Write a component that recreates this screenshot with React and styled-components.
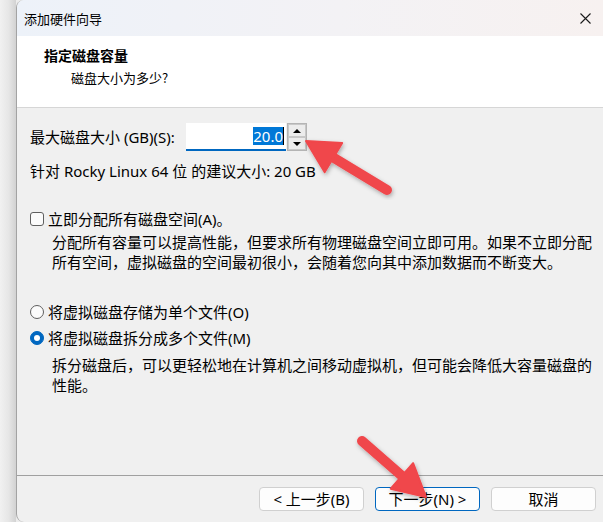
import React from "react";
import styled, { createGlobalStyle } from "styled-components";

const GlobalStyle = createGlobalStyle`
  html, body {
    margin: 0;
    padding: 0;
    background: #ececec;
  }
  body {
    font-family: "Noto Sans", "Noto Sans CJK SC", sans-serif;
    color: #000;
  }
`;

const Page = styled.div`
  position: relative;
  display: flex;
  width: 603px;
  height: 522px;
  overflow: hidden;
`;

const ShadowStrip = styled.div`
  width: 16px;
  flex-shrink: 0;
  background: linear-gradient(90deg, #f1f1f1 0%, #e6e6e6 55%, #d2d2d2 100%);
`;

const Window = styled.div`
  flex: 1;
  display: flex;
  flex-direction: column;
  background: #f0f0f0;
  border-left: 1px solid #a3a3a3;
  border-radius: 8px 0 0 8px;
  overflow: hidden;
`;

const TitleBar = styled.div`
  height: 36px;
  display: flex;
  align-items: center;
  justify-content: space-between;
  padding: 0 12px 0 7px;
  background: linear-gradient(90deg, #edf2f9 0%, #f3f2f5 55%, #f7f1f0 100%);
  font-family: "Noto Sans CJK SC", sans-serif;
  font-size: 13px;
`;

const Header = styled.div`
  height: 72px;
  box-sizing: border-box;
  background: #fff;
  border-bottom: 1px solid #d6d6d6;
  padding: 9px 0 0 27px;
  font-family: "Noto Sans CJK SC", sans-serif;
`;

const HeaderTitle = styled.div`
  font-size: 14px;
  font-weight: 700;
  line-height: 20px;
`;

const HeaderSub = styled.div`
  font-size: 13px;
  line-height: 20px;
  margin: 3px 0 0 27px;
`;

const Body = styled.div`
  flex: 1;
  padding: 15px 0 0 13px;
  font-size: 15px;
  line-height: 20px;
`;

const SizeRow = styled.div`
  display: flex;
  align-items: center;
  height: 28px;
`;

const SizeLabel = styled.span`
  width: 156px;
`;

const SizeInput = styled.div`
  width: 100px;
  height: 28px;
  box-sizing: border-box;
  background: #fff;
  border-bottom: 2px solid #0067c0;
  display: flex;
  align-items: center;
  justify-content: flex-end;
  padding-right: 2px;
`;

const Selected = styled.span`
  background: #0078d7;
  color: #fff;
  line-height: 18px;
`;

const Caret = styled.span`
  width: 1px;
  height: 18px;
  background: #000;
`;

const Spinner = styled.div`
  display: flex;
  flex-direction: column;
  width: 20px;
  height: 28px;
  margin-left: 1px;
  border: 1px solid #b4b4b4;
  box-sizing: border-box;
`;

const SpinButton = styled.div`
  flex: 1;
  display: flex;
  align-items: center;
  justify-content: center;
  background: #ececec;
  border: 1px solid #c8c8c8;
  &::after {
    content: "";
    border-left: 4px solid transparent;
    border-right: 4px solid transparent;
    ${(p) => (p.$down ? "border-top: 4px solid #000;" : "border-bottom: 4px solid #000;")}
  }
`;

const Line = styled.div`
  margin-top: ${(p) => p.$top || 0}px;
`;

const Option = styled.label`
  display: flex;
  align-items: center;
  gap: 4px;
  margin-top: ${(p) => p.$top || 0}px;
`;

const CheckBox = styled.span`
  width: 14px;
  height: 14px;
  box-sizing: border-box;
  border: 1px solid #5f5f5f;
  border-radius: 3px;
  background: #fbfbfb;
`;

const Radio = styled.span`
  width: 14px;
  height: 14px;
  box-sizing: border-box;
  border-radius: 50%;
  display: flex;
  align-items: center;
  justify-content: center;
  border: 1px solid ${(p) => (p.$checked ? "#0067c0" : "#5f5f5f")};
  background: ${(p) => (p.$checked ? "#0067c0" : "#fbfbfb")};
  &::after {
    content: "";
    width: 6px;
    height: 6px;
    border-radius: 50%;
    background: ${(p) => (p.$checked ? "#fff" : "transparent")};
  }
`;

const Note = styled.p`
  margin: ${(p) => p.$top || 0}px 0 0 22px;
  width: 546px;
`;

const Footer = styled.div`
  height: 47px;
  box-sizing: border-box;
  border-top: 1px solid #a0a0a0;
  display: flex;
  justify-content: flex-end;
  gap: 11px;
  padding: 11px 7px 0 0;
`;

const Button = styled.button`
  width: 105px;
  height: 24px;
  box-sizing: border-box;
  background: #fdfdfd;
  border: 1px solid ${(p) => (p.$primary ? "#0067c0" : "#d0d0d0")};
  border-radius: 4px;
  font-family: "Noto Sans", "Noto Sans CJK SC", sans-serif;
  font-size: 15px;
  line-height: 20px;
  color: #000;
  padding: 0;
`;

const Arrows = styled.svg`
  position: absolute;
  left: 0;
  top: 0;
  pointer-events: none;
`;

function Arrow({ from, to }) {
  const [x1, y1] = from;
  const [x2, y2] = to;
  const len = Math.hypot(x2 - x1, y2 - y1);
  const ux = (x2 - x1) / len;
  const uy = (y2 - y1) / len;
  const bx = x2 - ux * 32;
  const by = y2 - uy * 32;
  const nx = -uy * 17;
  const ny = ux * 17;
  return (
    <g filter="url(#arrowShadow)">
      <line x1={x1} y1={y1} x2={bx + ux * 4} y2={by + uy * 4} stroke="#f0464b" strokeWidth="10" strokeLinecap="round" />
      <polygon
        points={`${x2},${y2} ${bx + nx},${by + ny} ${bx - nx},${by - ny}`}
        fill="#f0464b"
        stroke="#f0464b"
        strokeWidth="2"
        strokeLinejoin="round"
      />
    </g>
  );
}

export default function App() {
  return (
    <>
      <GlobalStyle />
      <Page>
        <ShadowStrip />
        <Window>
          <TitleBar>
            <span>添加硬件向导</span>
            <svg width="11" height="11" viewBox="0 0 11 11">
              <path d="M0.5 0.5 L10.5 10.5 M10.5 0.5 L0.5 10.5" stroke="#1a1a1a" strokeWidth="1.1" />
            </svg>
          </TitleBar>
          <Header>
            <HeaderTitle>指定磁盘容量</HeaderTitle>
            <HeaderSub>磁盘大小为多少?</HeaderSub>
          </Header>
          <Body>
            <SizeRow>
              <SizeLabel>最大磁盘大小 (GB)(S):</SizeLabel>
              <SizeInput>
                <Selected>20.0</Selected>
                <Caret />
              </SizeInput>
              <Spinner>
                <SpinButton />
                <SpinButton $down />
              </Spinner>
            </SizeRow>
            <Line $top={10}>针对 Rocky Linux 64 位 的建议大小: 20 GB</Line>
            <Option $top={28}>
              <CheckBox />
              立即分配所有磁盘空间(A)。
            </Option>
            <Note $top={3}>
              分配所有容量可以提高性能，但要求所有物理磁盘空间立即可用。如果不立即分配所有空间，虚拟磁盘的空间最初很小，会随着您向其中添加数据而不断变大。
            </Note>
            <Option $top={30}>
              <Radio />
              将虚拟磁盘存储为单个文件(O)
            </Option>
            <Option $top={6}>
              <Radio $checked />
              将虚拟磁盘拆分成多个文件(M)
            </Option>
            <Note $top={7}>
              拆分磁盘后，可以更轻松地在计算机之间移动虚拟机，但可能会降低大容量磁盘的性能。
            </Note>
          </Body>
          <Footer>
            <Button>&lt; 上一步(B)</Button>
            <Button $primary>下一步(N) &gt;</Button>
            <Button>取消</Button>
          </Footer>
        </Window>
        <Arrows width="603" height="522" viewBox="0 0 603 522">
          <defs>
            <filter id="arrowShadow" x="-20%" y="-20%" width="140%" height="140%">
              <feDropShadow dx="1" dy="2" stdDeviation="2" floodColor="#000" floodOpacity="0.3" />
            </filter>
          </defs>
          <Arrow from={[387, 190]} to={[306, 141]} />
          <Arrow from={[362, 441]} to={[426, 497]} />
        </Arrows>
      </Page>
    </>
  );
}
